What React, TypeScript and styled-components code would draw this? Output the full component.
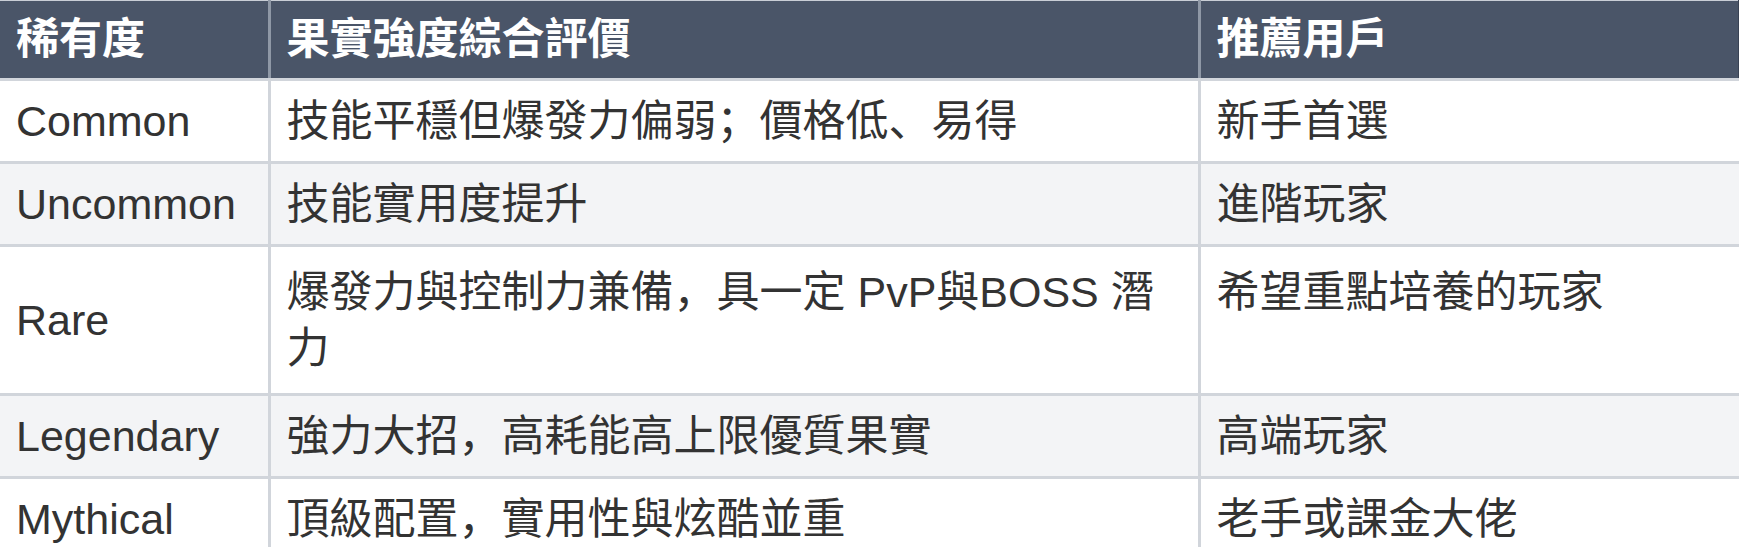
import styled, { createGlobalStyle } from "styled-components";

const GlobalStyle = createGlobalStyle`
  html, body {
    margin: 0;
    padding: 0;
    background: #ffffff;
  }
  body {
    font-family: "Liberation Sans", "Noto Sans CJK SC", sans-serif;
    color: #333333;
  }
`;

type Row = {
  rarity: string;
  rating: string;
  users: string;
  tall?: boolean;
};

const ROWS: Row[] = [
  { rarity: "Common", rating: "技能平穩但爆發力偏弱；價格低、易得", users: "新手首選" },
  { rarity: "Uncommon", rating: "技能實用度提升", users: "進階玩家" },
  {
    rarity: "Rare",
    rating: "爆發力與控制力兼備，具一定 PvP與BOSS 潛力",
    users: "希望重點培養的玩家",
    tall: true,
  },
  { rarity: "Legendary", rating: "強力大招，高耗能高上限優質果實", users: "高端玩家" },
  { rarity: "Mythical", rating: "頂級配置，實用性與炫酷並重", users: "老手或課金大佬" },
];

export default function App() {
  return (
    <>
      <GlobalStyle />
      <Table>
        <colgroup>
          <col style={{ width: 269 }} />
          <col style={{ width: 930 }} />
          <col />
        </colgroup>
        <thead>
          <tr>
            <HeadCell>稀有度</HeadCell>
            <HeadCell>果實強度綜合評價</HeadCell>
            <HeadCell>推薦用戶</HeadCell>
          </tr>
        </thead>
        <tbody>
          {ROWS.map((row, i) => (
            <BodyRow key={row.rarity} $striped={i % 2 === 1}>
              <Cell $tall={row.tall}>{row.rarity}</Cell>
              <Cell $tall={row.tall} $top>
                {row.rating}
              </Cell>
              <Cell $tall={row.tall} $top>
                {row.users}
              </Cell>
            </BodyRow>
          ))}
        </tbody>
      </Table>
    </>
  );
}

const Table = styled.table`
  width: 100%;
  table-layout: fixed;
  border-collapse: collapse;
  border-top: 1px solid #c9ced6;
  font-size: 43px;
  line-height: 56px;
`;

const HeadCell = styled.th`
  background: #4a5568;
  color: #ffffff;
  font-weight: 700;
  text-align: left;
  padding: 10px 16px 11px;
  border-right: 3px solid #8f98a6;
  border-bottom: 3px solid #d1d5db;
  white-space: nowrap;
  &:last-child {
    border-right: 1px solid #3a4354;
  }
`;

const BodyRow = styled.tr<{ $striped: boolean }>`
  background: ${({ $striped }) => ($striped ? "#f3f4f6" : "#ffffff")};
`;

const Cell = styled.td<{ $tall?: boolean; $top?: boolean }>`
  padding: ${({ $tall }) => ($tall ? "17px 16px" : "12px 16px")};
  vertical-align: ${({ $top, $tall }) => ($top && $tall ? "top" : "middle")};
  border-right: 3px solid #d1d5db;
  border-bottom: 3px solid #d1d5db;
  &:last-child {
    border-right: none;
  }
`;
